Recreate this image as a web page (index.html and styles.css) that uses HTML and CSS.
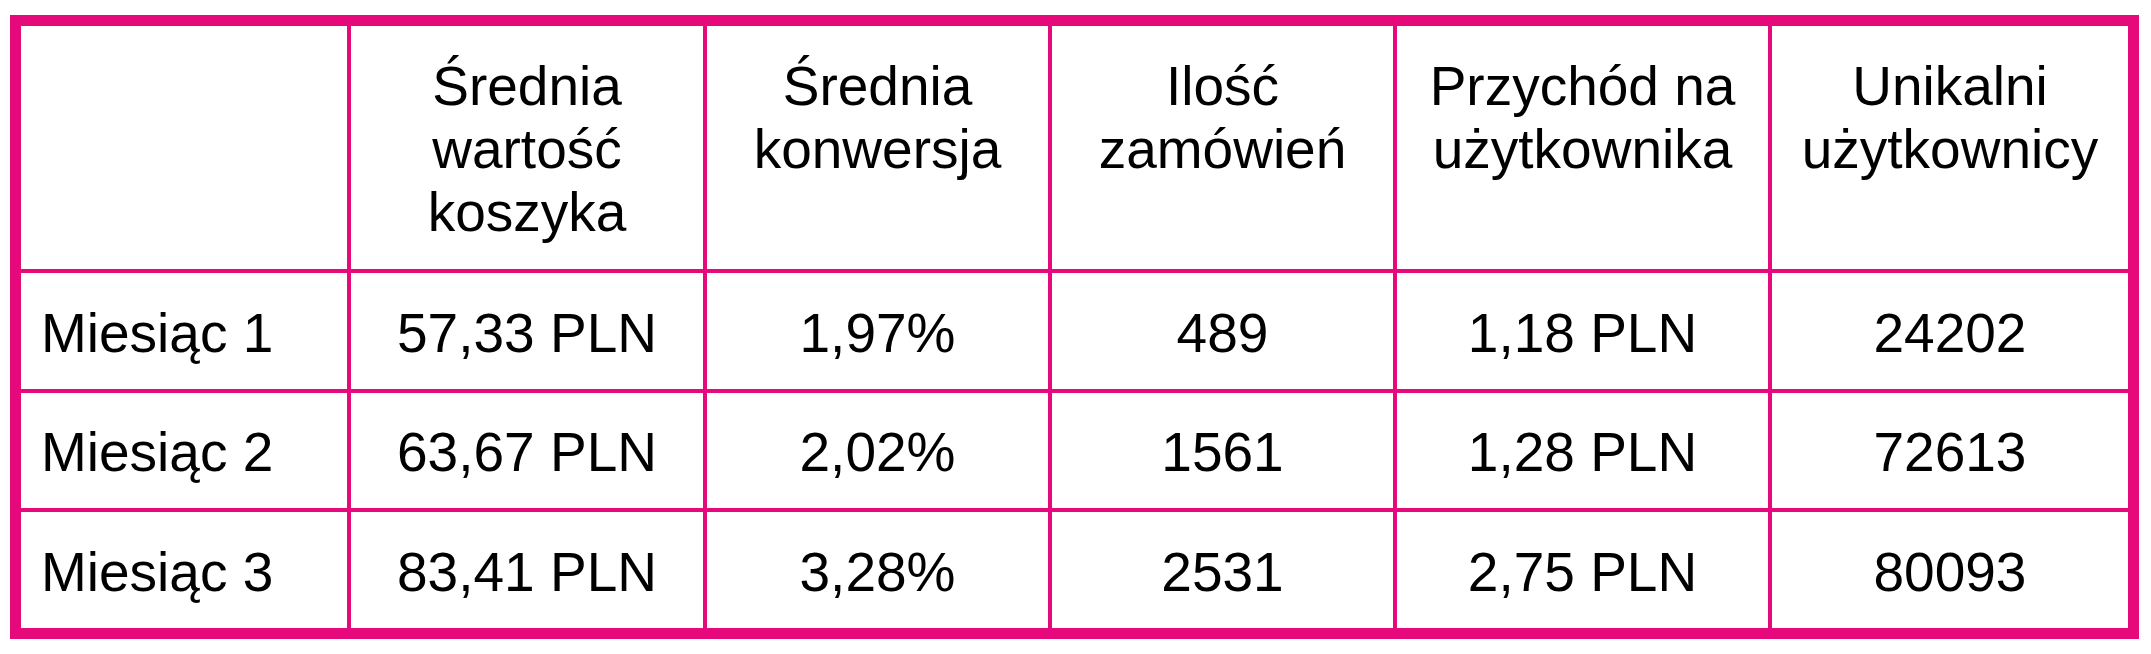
FILE: index.html
```html
<!DOCTYPE html>
<html lang="pl">
<head>
    <meta charset="UTF-8">
    <meta name="viewport" content="width=device-width, initial-scale=1.0">
    <title>Wyniki miesięczne</title>
    <link rel="stylesheet" href="styles.css">
</head>
<body>
    <div class="stats-table">
        <div class="cell head"></div>
        <div class="cell head">Średnia wartość koszyka</div>
        <div class="cell head">Średnia konwersja</div>
        <div class="cell head">Ilość zamówień</div>
        <div class="cell head">Przychód na użytkownika</div>
        <div class="cell head">Unikalni użytkownicy</div>

        <div class="cell label">Miesiąc 1</div>
        <div class="cell">57,33 PLN</div>
        <div class="cell">1,97%</div>
        <div class="cell">489</div>
        <div class="cell">1,18 PLN</div>
        <div class="cell">24202</div>

        <div class="cell label">Miesiąc 2</div>
        <div class="cell">63,67 PLN</div>
        <div class="cell">2,02%</div>
        <div class="cell">1561</div>
        <div class="cell">1,28 PLN</div>
        <div class="cell">72613</div>

        <div class="cell label">Miesiąc 3</div>
        <div class="cell">83,41 PLN</div>
        <div class="cell">3,28%</div>
        <div class="cell">2531</div>
        <div class="cell">2,75 PLN</div>
        <div class="cell">80093</div>
    </div>
</body>
</html>
```

FILE: styles.css
```css
body {
    margin: 0;
    padding: 15px 0 0 10px;
    background: #ffffff;
    font-family: 'Liberation Sans', Arial, sans-serif;
    color: #000000;
}

.stats-table {
    display: inline-grid;
    grid-template-columns: 326px 352px 341px 341px 371px 356px;
    grid-template-rows: 243px 116px 115px 116px;
    gap: 4px;
    border: 11px solid #e6097c;
    background: #e6097c;
}

.cell {
    background: #ffffff;
    font-size: 55px;
    line-height: 63px;
    display: flex;
    align-items: center;
    justify-content: center;
    text-align: center;
    padding: 4px 10px 0;
}

.head {
    align-items: flex-start;
    padding-top: 29px;
}

.label {
    justify-content: flex-start;
    text-align: left;
    padding-left: 20px;
}
```
